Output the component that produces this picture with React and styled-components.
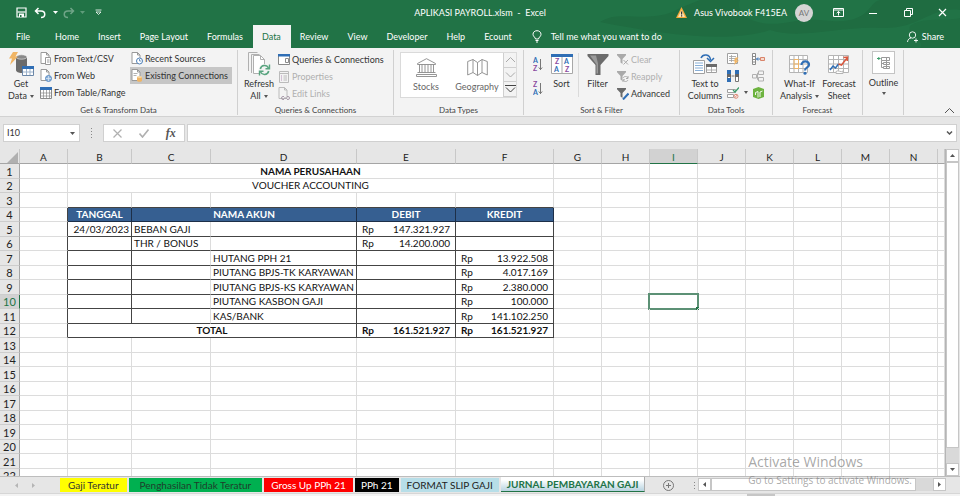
import React from "react";
import styled, { createGlobalStyle, css } from "styled-components";

const GlobalStyle = createGlobalStyle`
  * {
    box-sizing: border-box;
  }

  body {
    margin: 0;
    overflow: hidden;
    font-family: Lato, "Open Sans", sans-serif;
    font-size: 9px;
    line-height: 12px;
    color: #333;
  }

  button,
  input {
    font: inherit;
    color: inherit;
    margin: 0;
    padding: 0;
    border: none;
    border-radius: 0;
    background: none;
  }

  svg {
    display: block;
    flex: none;
  }
`;

const Window = styled.div`
  position: relative;
  display: flex;
  flex-direction: column;
  height: 100vh;
  background-color: #e6e6e6;
`;

/* ---------- header ---------- */

const Header = styled.header`
  position: relative;
  background-color: #217346;
  color: #fff;
`;

const HeaderArt = styled.svg`
  position: absolute;
  top: 0;
  right: 0;
`;

const TitleBar = styled.div`
  position: relative;
  display: grid;
  grid-template-columns: 1fr auto 1fr;
  align-items: center;
  height: 25px;
`;

const QuickAccess = styled.div`
  display: flex;
  align-items: center;
  padding-left: 14px;
`;

const PlainButton = styled.button`
  display: flex;
  align-items: center;
  justify-content: center;
  width: ${(props) => props.$width || 14}px;
  opacity: ${(props) => (props.$dim ? 0.35 : 1)};
`;

const Title = styled.div`
  white-space: pre;
`;

const Account = styled.div`
  display: flex;
  align-items: center;
  justify-content: flex-end;
  white-space: nowrap;
`;

const UserName = styled.span`
  margin: 0 8px 0 7px;
`;

const Avatar = styled.span`
  width: 18px;
  height: 18px;
  margin-right: 9px;
  border-radius: 50%;
  background-color: #d5d5d5;
  color: #777;
  font-size: 8px;
  line-height: 18px;
  text-align: center;
`;

const TabBar = styled.nav`
  position: relative;
  display: flex;
  height: 23px;
`;

const RibbonTab = styled.button`
  padding: 0 10px 0 9px;
  white-space: nowrap;

  &:first-child {
    padding: 0 16px;
  }

  ${(props) =>
    props.$active &&
    css`
      background-color: #f3f3f3;
      color: #217346;
    `}
`;

const TellMe = styled.button`
  display: flex;
  align-items: center;
  gap: 9px;
  margin-left: 10px;
  white-space: nowrap;
`;

const Share = styled.button`
  display: flex;
  align-items: center;
  gap: 4px;
  margin-left: auto;
  padding-right: 16px;
`;

/* ---------- ribbon ---------- */

const Ribbon = styled.div`
  display: flex;
  height: 69px;
  background-color: #f3f3f3;
  border-bottom: 1px solid #d2d2d2;
`;

const GroupBox = styled.section`
  display: flex;
  flex-direction: column;
  flex: none;
  width: ${(props) => props.$width}px;
  margin: 2px 0 1px;
  border-right: 1px solid #d0d0d0;
`;

const GroupBody = styled.div`
  display: flex;
  flex: 1;
  min-height: 0;
  padding-left: ${(props) => props.$indent || 0}px;
`;

const GroupName = styled.div`
  flex: none;
  font-size: 8px;
  line-height: 8px;
  height: 9px;
  text-align: center;
  color: #444;
`;

const BigButton = styled.button`
  display: flex;
  flex-direction: column;
  align-items: center;
  align-self: flex-start;
  width: ${(props) => props.$width}px;
  white-space: nowrap;
`;

const BigIcon = styled.span`
  display: flex;
  align-items: center;
  height: 28px;
`;

const WithArrow = styled.span`
  display: flex;
  align-items: center;
  gap: 3px;
`;

const Stack = styled.div`
  display: flex;
  flex-direction: column;
  align-items: flex-start;
  width: ${(props) => props.$width || 0}px;
  padding-top: ${(props) => (props.$low ? 1 : 0)}px;
`;

const SmallButton = styled.button`
  display: flex;
  align-items: center;
  gap: 2px;
  height: 17px;
  padding: 0 4px 0 1px;
  white-space: nowrap;
  color: ${(props) => (props.disabled ? "#b0b0b0" : "#333")};
  background-color: ${(props) => (props.$active ? "#c6c6c6" : "transparent")};
`;

const Gallery = styled.div`
  display: flex;
  flex: 1;
  height: 46px;
  margin: 2px 6px 0 0;
  border: 1px solid #dadada;
  background-color: #fff;
  color: #666;
`;

const GalleryItem = styled.button`
  display: flex;
  flex-direction: column;
  align-items: center;
  gap: 4px;
  padding-top: 5px;
  width: ${(props) => props.$width}px;
`;

const GalleryScroll = styled.div`
  display: flex;
  flex-direction: column;
  width: 13px;
  margin-left: auto;

  button {
    display: flex;
    flex: 1;
    align-items: center;
    justify-content: center;
    border-left: 1px solid #cfcfcf;
    border-bottom: 1px solid #cfcfcf;
    background-color: #f3f3f3;
  }
`;

const Divider = styled.div`
  width: 1px;
  height: 44px;
  margin-top: 3px;
  background-color: #dadada;
`;

const SortColumn = styled.div`
  display: flex;
  flex-direction: column;
  gap: 9px;
  width: 12px;
  padding-top: 7px;
`;

const ToolGrid = styled.div`
  display: grid;
  grid-template-columns: 25px 14px;
  grid-auto-rows: 17px;
  padding-left: 2px;

  button {
    display: flex;
    align-items: center;
    gap: 5px;
  }
`;

const OutlineButton = styled(BigButton)`
  gap: 3px;
`;

const OutlineFrame = styled.span`
  display: flex;
  align-items: center;
  justify-content: center;
  width: 23px;
  height: 23px;
  margin-top: 1px;
  border: 1px solid #c4c4c4;
  background-color: #fff;
`;

const Collapse = styled.button`
  display: flex;
  align-items: flex-end;
  margin-left: auto;
  padding: 0 5px 1px;
`;

/* ---------- formula bar ---------- */

const FormulaBar = styled.div`
  display: flex;
  align-items: center;
  height: 32px;
  padding: 0 3px;
`;

const Field = styled.div`
  display: flex;
  align-items: center;
  height: 18px;
  border: 1px solid #d0d0d0;
  background-color: #fff;
  width: ${(props) => (props.$width ? `${props.$width}px` : "auto")};
  flex: ${(props) => (props.$width ? "none" : 1)};
  justify-content: ${(props) => props.$justify || "flex-start"};

  input {
    flex: 1;
    min-width: 0;
    padding-left: 3px;
    outline: none;
  }
`;

const FormulaField = styled(Field)`
  margin-left: 2px;
`;

const Dots = styled.span`
  display: flex;
  flex-direction: column;
  align-items: center;
  justify-content: center;
  gap: 2px;
  width: ${(props) => props.$width}px;

  i {
    width: 1px;
    height: 1px;
    background-color: #888;
  }
`;

const FxButton = styled.button`
  width: 26px;
  font-family: "Liberation Serif", serif;
  font-size: 12px;
  font-style: italic;
  font-weight: bold;
  color: #555;
`;

/* ---------- worksheet ---------- */

const SheetArea = styled.main`
  display: flex;
  flex: 1;
  min-height: 0;
`;

const GridWrap = styled.div`
  flex: 1;
  min-width: 0;
  overflow: hidden;
  border-right: 1px solid #b5b5b5;
`;

const Grid = styled.table`
  width: 100%;
  table-layout: fixed;
  border-collapse: separate;
  border-spacing: 0;
  background-color: #fff;
  color: #111;
  font-size: 10px;
  line-height: 13px;
`;

const Col = styled.col`
  width: ${(props) => (props.$width ? `${props.$width}px` : "auto")};
`;

const ColHead = styled.th`
  height: 15px;
  padding: 2px 0 0;
  line-height: 12px;
  font-weight: 400;
  background-color: ${(props) => (props.$active ? "#d2d2d2" : "#e6e6e6")};
  color: ${(props) => (props.$active ? "#217346" : "#222")};
  border-right: 1px solid #c8c8c8;
  border-bottom: 1px solid ${(props) => (props.$active ? "#217346" : "#a5a5a5")};
`;

const Corner = styled(ColHead)`
  svg {
    margin: 0 1px 0 auto;
  }
`;

const RowHead = styled.th`
  padding: 0;
  font-size: 11px;
  font-weight: 400;
  background-color: ${(props) => (props.$active ? "#d2d2d2" : "#e6e6e6")};
  color: ${(props) => (props.$active ? "#217346" : "#222")};
  border-right: 1px solid ${(props) => (props.$active ? "#217346" : "#a5a5a5")};
  border-bottom: 1px solid #cdcdcd;
`;

const Row = styled.tr`
  height: ${(props) => (props.$number % 2 ? 15 : 14)}px;
`;

const Cell = styled.td`
  position: relative;
  padding: 0 2px;
  white-space: nowrap;
  text-align: ${(props) => props.$align || "left"};
  font-weight: ${(props) => (props.$bold ? 700 : 400)};
  border-right: 1px solid ${(props) => (props.$right ? "#444" : "#dcdcdc")};
  border-bottom: 1px solid ${(props) => (props.$bottom ? "#444" : "#dcdcdc")};

  ${(props) =>
    props.$head &&
    css`
      background-color: #365f91;
      color: #fff;
      border-color: #1d2f48;
    `}
`;

const Money = styled.div`
  display: flex;
  justify-content: space-between;
  padding: 0 3px;
`;

const Selection = styled.div`
  position: absolute;
  inset: -2px;
  border: 2px solid #5c9175;

  &::after {
    content: "";
    position: absolute;
    right: -2px;
    bottom: -2px;
    width: 3px;
    height: 3px;
    background-color: #217346;
  }
`;

const ScrollBar = styled.div`
  display: flex;
  flex-direction: ${(props) => (props.$vertical ? "column" : "row")};
  background-color: #d9d9d9;

  button {
    display: flex;
    align-items: center;
    justify-content: center;
    flex: none;
    width: 13px;
    height: 13px;
    background-color: #fff;
    border: 1px solid #c6c6c6;
  }
`;

const VerticalBar = styled(ScrollBar)`
  width: 13px;
  margin-right: 1px;
`;

const HorizontalBar = styled(ScrollBar)`
  flex: 1;
  margin: 1px 14px 0 0;
  height: 13px;
`;

const Thumb = styled.div`
  flex: ${(props) => props.$grow};
  background-color: #fff;
  border: 1px solid #c6c6c6;
`;

const Track = styled.div`
  flex: ${(props) => props.$grow};
`;

/* ---------- bottom ---------- */

const BottomBar = styled.footer`
  display: flex;
  height: 17px;
  border-top: 1px solid #bdbdbd;
`;

const SheetNav = styled.div`
  display: flex;
  align-items: center;
  justify-content: center;
  gap: 10px;
  width: 60px;
  padding-right: 10px;
`;

const SheetTab = styled.button`
  height: 14px;
  padding: 0 ${(props) => props.$pad}px;
  margin: 1px 2px 0 0;
  font-size: 10px;
  white-space: nowrap;
  background-color: ${(props) => props.$bg};
  color: ${(props) => props.$color};

  ${(props) =>
    props.$active &&
    css`
      height: 15px;
      margin: 0;
      font-weight: 700;
      background: linear-gradient(#fff 20%, #b7d3e0);
      border-bottom: 1px solid #217346;
      border-right: 1px solid #ababab;
    `}
`;

const AddSheet = styled.button`
  width: 46px;
  display: flex;
  align-items: center;
  justify-content: center;
`;

const StatusBar = styled.div`
  display: flex;
  align-items: flex-end;
  justify-content: flex-end;
  height: 3px;
  padding-right: 185px;
  background-color: #f3f3f3;
  border-top: 1px solid #d6d6d6;
`;

const ViewMode = styled.div`
  width: 28px;
  height: 2px;
  background-color: #c6c6c6;
`;

const Watermark = styled.div`
  position: absolute;
  right: 48px;
  bottom: 9px;
  color: rgba(130, 130, 130, 0.7);
  font-family: "Open Sans", sans-serif;
  font-size: 10px;
  line-height: 14px;
  white-space: nowrap;
  pointer-events: none;

  strong {
    display: block;
    font-size: 14px;
    line-height: 22px;
    font-weight: 400;
  }
`;

/* ---------- icons ---------- */

const Svg = ({ w, h, children, ...rest }) => (
  <svg
    width={w}
    height={h}
    viewBox={`0 0 ${w} ${h}`}
    fill="none"
    stroke="currentColor"
    aria-hidden="true"
    {...rest}
  >
    {children}
  </svg>
);

const Triangle = ({ dir = "down", color = "#555" }) => {
  const paths = {
    down: "M1 2h5L3.5 5z",
    up: "M1 5h5L3.5 2z",
    left: "M5 1v5L2 3.5z",
    right: "M2 1v5l3-2.5z",
  };
  return (
    <Svg w={7} h={7} stroke="none" fill={color}>
      <path d={paths[dir]} />
    </Svg>
  );
};

const MenuArrow = () => (
  <Svg w={4} h={3} stroke="none" fill="#555">
    <path d="M0 0h4L2 3z" />
  </Svg>
);

const Chevron = ({ up, color = "#777", bar }) => (
  <Svg w={11} h={9} stroke={color}>
    {bar && <path d="M0 .5h11" />}
    <path d={up ? "M1 7l4.5-4.5L10 7" : "M1 2.5L5.5 7 10 2.5"} />
  </Svg>
);

const SaveIcon = () => (
  <Svg w={11} h={11}>
    <path d="M1 1h9v9H1z" strokeWidth="1.2" />
    <path d="M1.5 5h8" strokeWidth="1.2" />
    <path d="M3 6.5h5V10H3z" fill="#fff" stroke="none" />
    <path d="M4 8h1.5v2H4z" fill="#217346" stroke="none" />
  </Svg>
);

const UndoIcon = ({ flip }) => (
  <Svg w={12} h={12} strokeWidth="1.5">
    <g transform={flip ? "translate(12 0) scale(-1 1)" : undefined}>
      <path d="M4.5 1L1.5 4l3 3M1.5 4H7c5 0 5 6.5 0 6.5" />
    </g>
  </Svg>
);

const WarningIcon = () => (
  <Svg w={11} h={11} stroke="none">
    <path d="M5.5 0L11 11H0z" fill="#f7a93b" />
    <path d="M5.5 3L9 10H2z" fill="#fce3b4" />
    <path d="M5 4.5h1.2v3H5zM5 8.2h1.2v1.2H5z" fill="#333" />
  </Svg>
);

const DisplayIcon = () => (
  <Svg w={11} h={9}>
    <path d="M.5.5h10v8H.5zM.5 2h10" />
    <path d="M5.5 7.5v-4M3.7 5.2l1.8-1.8 1.8 1.8" />
  </Svg>
);

const BulbIcon = () => (
  <Svg w={10} h={13}>
    <path d="M3.5 9C3.5 7.5 1 6.5 1 4.3 1 2.2 2.7.7 5 .7s4 1.5 4 3.6C9 6.5 6.5 7.5 6.5 9zM3.5 10.5h3M4 12h2" />
  </Svg>
);

const PersonIcon = () => (
  <Svg w={11} h={12} strokeWidth=".9">
    <circle cx="5.5" cy="4" r="3.2" />
    <path d="M.5 11c.3-2.5 1.7-3.8 3.5-4M7 9.5h4M9 7.5v4" />
  </Svg>
);

const GetDataIcon = () => (
  <Svg w={25} h={24} stroke="none">
    <path d="M7 5v13c0 4 11 4 11 0V5z" fill="#6b6b6b" />
    <ellipse cx="12.5" cy="5" rx="5.5" ry="2.2" fill="#8a8a8a" stroke="#f3f3f3" strokeWidth=".6" />
    <path d="M4 0h5L6.5 4.5H9L1 13l2-6.5H0z" fill="#f0b565" />
    <path d="M13.5 14.5h11v9h-11z" fill="#fff" stroke="#6b87a8" />
    <path d="M13 14h12v3H13z" fill="#2f6eb5" />
    <path d="M17.5 17v6M21 17v6M14 20h10" stroke="#9db3cc" />
  </Svg>
);

const FileIcon = ({ kind, muted }) => (
  <Svg w={12} h={13} stroke={muted ? "#bbb" : "#999"}>
    <path d="M1 .5h5.5L9 3v8.5H1z" fill={muted ? "#f3f3f3" : "#fff"} />
    <path d="M6.5.5V3H9" />
    {kind === "csv" && <path d="M5.5 5.5h5v7h-5zM7 8h2.5M7 10h2.5" fill="#fff" />}
    {kind === "web" && (
      <g>
        <circle cx="8.5" cy="9.5" r="3" fill="#8fb3da" stroke="#5f8fc4" />
        <path d="M6 9.5h5M8.5 7v5" stroke="#dbe8f5" strokeWidth=".7" />
      </g>
    )}
    {kind === "recent" && (
      <g>
        <circle cx="8.5" cy="9" r="3" fill="#fff" stroke="#4d7fb8" />
        <path d="M8.5 7v2h1.7" stroke="#4d7fb8" strokeWidth=".8" />
      </g>
    )}
    {kind === "conn" && (
      <g stroke="none">
        <path d="M2.5 4h4v.8h-4zM2.5 6h3v.8h-3z" fill="#999" />
        <path d="M6 8v3.5c0 1.8 5 1.8 5 0V8z" fill="#f0b565" />
        <ellipse cx="8.5" cy="8" rx="2.5" ry="1" fill="#f8d7a3" />
      </g>
    )}
    {kind === "links" && (
      <path d="M6 9.5H5a1.5 1.5 0 000 3h1M9 9.5h1a1.5 1.5 0 010 3H9M6 11h3" stroke="#a99bab" />
    )}
  </Svg>
);

const TableIcon = () => (
  <Svg w={12} h={12} stroke="#8a8a8a">
    <path d="M.5.5h11v11H.5z" fill="#fff" />
    <path d="M0 0h12v3H0z" fill="#2f6eb5" stroke="none" />
    <path d="M3.5 3v9M6.5 3v9M9.5 3v9M0 6h12M0 9h12" strokeWidth=".7" />
  </Svg>
);

const RefreshIcon = () => (
  <Svg w={23} h={24} stroke="#b0b0b0">
    <path d="M.5 19V.5h9M3.5 21V2.5h8" />
    <path d="M5.5 3.5h7l4 4v14h-11z" fill="#fff" />
    <path d="M12.5 3.5v4h4" />
    <circle cx="16.5" cy="18" r="6" fill="#f3f3f3" stroke="none" />
    <path d="M12.3 17c1-4.3 6.5-4.5 8.2-1M20.7 19c-1 4.3-6.5 4.5-8.2 1" stroke="#5aa580" strokeWidth="1.6" />
    <path d="M21.5 12.5v4.3h-4M11.5 23.5v-4.3h4" stroke="#5aa580" strokeWidth="1.4" />
  </Svg>
);

const QueriesIcon = () => (
  <Svg w={12} h={11} stroke="#8a8a8a">
    <path d="M.5.5h11v10H.5z" fill="#fff" />
    <path d="M0 0h12v2.5H0z" fill="#2f6eb5" stroke="none" />
    <path d="M7.5 4.5h3v4h-3z" />
  </Svg>
);

const PropertiesIcon = () => (
  <Svg w={12} h={12} stroke="#bbb">
    <path d="M1.5.5h9v11h-9zM1.5 2.5h9" />
    <path d="M3 5h1M3 7h1M3 9h1" stroke="#b58fb9" />
    <path d="M5.5 5H9M5.5 7H9M5.5 9H9" />
  </Svg>
);

const StocksIcon = () => (
  <Svg w={21} h={19} stroke="#8a8a8a">
    <path d="M1.5 6.5v-1L10.5.7l9 4.8v1zM3.5 6.5v8M6 6.5v8M9 6.5v8M12 6.5v8M15 6.5v8M17.5 6.5v8M1.5 14.5h18M.5 18.5v-2h20v2z" strokeWidth=".9" />
  </Svg>
);

const MapIcon = () => (
  <Svg w={21} h={19} stroke="#8a8a8a">
    <path d="M.7 3.5L6 1.5l4.5 3 4.5-3 5.3 2v13.5L15 14.5l-4.5 3-4.5-3-5.3 2.5zM6 1.5v13M10.5 4.5v13M15 1.5v13" strokeWidth=".9" />
  </Svg>
);

const Letter = ({ x, y, fill, children }) => (
  <text
    x={x}
    y={y}
    fontSize="7"
    fontWeight="700"
    fontFamily="Lato, sans-serif"
    fill={fill}
    stroke="none"
  >
    {children}
  </text>
);

const blue = "#2f6eb5";
const purple = "#8a4a9e";

const SortDirIcon = ({ desc }) => (
  <Svg w={10} h={15} stroke="#777">
    <Letter x={0} y={6} fill={desc ? purple : blue}>{desc ? "Z" : "A"}</Letter>
    <Letter x={0} y={14} fill={desc ? blue : purple}>{desc ? "A" : "Z"}</Letter>
    <path d="M7.5 2v11M5.8 10.5l1.7 2 1.7-2" />
  </Svg>
);

const SortIcon = () => (
  <Svg w={22} h={20} stroke="#a8a8a8">
    <path d="M.5.5h21v19H.5zM11 3v16" fill="#fff" />
    <path d="M0 0h22v3H0z" fill={blue} stroke="none" />
    <Letter x={4} y={10} fill={purple}>Z</Letter>
    <Letter x={3} y={18} fill={blue}>A</Letter>
    <Letter x={13} y={10} fill={blue}>A</Letter>
    <Letter x={14} y={18} fill={purple}>Z</Letter>
  </Svg>
);

const FilterIcon = () => (
  <Svg w={22} h={21} stroke="none">
    <path d="M.5 0h21v2L13.5 11v10h-5V11L.5 2z" fill="#6b6b6b" />
    <path d="M3 1.5h6l2 8v10h-1.5V10.5z" fill="#9a9a9a" />
  </Svg>
);

const SmallFilter = ({ kind }) => (
  <Svg w={12} h={12} stroke="none">
    <path d="M0 0h9v1.2L5.5 5v5l-2-1.5V5L0 1.2z" fill={kind === "advanced" ? "#6b6b6b" : "#aaa"} />
    {kind === "clear" && <path d="M6.5 6l4.5 4.5M11 6l-4.5 4.5" stroke="#aaa" />}
    {kind === "reapply" && (
      <path d="M6 7c1-2 4-2 5 0M11 5v2.5H9M11 9c-1 2-4 2-5 0M6 11V8.8h2" stroke="#aaa" />
    )}
    {kind === "advanced" && <path d="M6 11.5l5.5-6" stroke={blue} strokeWidth="2" />}
  </Svg>
);

const TextColumnsIcon = () => (
  <Svg w={24} h={20} stroke="#a0a0a0">
    <path d="M.5 6.5h11v13H.5z" fill="#fff" />
    <path d="M2 9h8M2 11.5h8M2 14h8M2 16.5h8" stroke="#7ba6d3" strokeWidth=".9" />
    <path d="M8 4c2-4.5 9-4 9.5 2" stroke={blue} strokeWidth="1.5" />
    <path d="M14 4l3.5 3.5L21 4" stroke={blue} strokeWidth="1.5" />
    <path d="M13.5 10.5h10v8h-10z" fill="#fff" />
    <path d="M13 10h11v3H13z" fill="#6b6b6b" stroke="none" />
    <path d="M18.5 13v6M13 16h11" strokeWidth=".8" />
  </Svg>
);

const FlashFillIcon = () => (
  <Svg w={12} h={12} stroke="#a0a0a0">
    <path d="M.5.5h10v10H.5z" fill="#fff" />
    <path d="M2 3.5h7M2 5.5h7M2 7.5h5M4.5 2v7" strokeWidth=".8" />
    <path d="M8.5 4.5h3L9.5 7.5H12L7 12l1-3.5H6.5z" fill="#f0b565" stroke="none" />
  </Svg>
);

const DuplicatesIcon = () => (
  <Svg w={12} h={12} stroke="#777">
    <path d="M.5.5h3v11h-3zM8.5.5h3v11h-3z" fill="#fff" />
    <path d="M0 0h4v4H0zM8 0h4v4H8zM0 8h4v4H0z" fill={blue} stroke="none" />
    <path d="M0 4h4v3H0zM8 4h4v3H8z" fill="#666" stroke="none" />
    <path d="M4.5 6h3" stroke="#777" />
  </Svg>
);

const ValidationIcon = () => (
  <Svg w={12} h={12} stroke="#a0a0a0">
    <path d="M.5 2.5h8v3h-8zM.5 7.5h6v3h-6z" fill="#fff" />
    <path d="M6 3l2 2 4-4.5" stroke="#3c9d6b" strokeWidth="1.3" />
    <circle cx="9" cy="9.3" r="2" stroke="#e08a78" />
    <path d="M7.7 10.6l2.6-2.6" stroke="#e08a78" />
  </Svg>
);

const ConsolidateIcon = () => (
  <Svg w={13} h={12} stroke="#8a8a8a">
    <path d="M.5.5h3v11h-3zM.5 3.5h3M.5 6.5h3M.5 9h3" fill="#fff" />
    <path d="M4.5 6H8M6 4.5L4.5 6 6 7.5" stroke={blue} />
    <path d="M8.5 4.5h4v3h-4z" fill="#f7d9cb" stroke="#d9846b" />
  </Svg>
);

const RelationsIcon = () => (
  <Svg w={13} h={12} stroke="#b0b0b0">
    <path d="M6.5 1h5v3.5h-5zM.5 4.5h4V8h-4zM6.5 7.5h5V11h-5zM4.5 6h1V3h1M5.5 6v3.5h1" />
  </Svg>
);

const ModelIcon = () => (
  <Svg w={12} h={12} stroke="none">
    <path d="M6.5 0L12 2v8l-5.5 2L1 10V2z" fill="#6db33f" />
    <path d="M3.5 8V5.5L6 4.5v6M8 10V5l2.5-1" stroke="#fff" fill="none" strokeWidth=".9" />
  </Svg>
);

const WhatIfIcon = () => (
  <Svg w={22} h={21} stroke="#b5b5b5">
    <path d="M.5 1.5h18v17H.5zM.5 5.5h18M.5 10h18M.5 14.5h18M5 1.5v17M9.5 1.5v17M14 1.5v17" fill="#fff" />
    <path d="M5 5.5h4.5v9H5zM5 10h4.5" stroke="#f0b565" />
    <path d="M12.5 11c0-5 8-4.5 7.5 0-.2 2.5-4 2.5-4 5.5" stroke={blue} strokeWidth="2.2" />
    <circle cx="16" cy="19.3" r="1.5" fill={blue} stroke="none" />
  </Svg>
);

const ForecastIcon = () => (
  <Svg w={22} h={21} stroke="#b5b5b5">
    <path d="M.5 1.5h20v17H.5zM.5 5.5h20M.5 10h20M.5 14.5h20M5.5 1.5v17M10.5 1.5v17M15.5 1.5v17" fill="#fff" />
    <path d="M2 16l3-4 2.5 2 3-4" stroke={blue} strokeWidth="1.5" />
    <path d="M10.5 10l3 1 5.5-7M15.5 3.5l4-.5-.3 4" stroke="#d9583f" strokeWidth="1.5" />
    <path d="M8 17.5c2-2 5 1.5 7-.5v2.5H8z" fill="#fff" />
  </Svg>
);

const OutlineIcon = () => (
  <Svg w={13} h={13} stroke="#999">
    <path d="M4.5 1.5h8v3h-8zM6.5 6.5h6v2h-6zM6.5 10.5h6v2h-6zM4.5 4.5v7h2M4.5 7.5h2M9.5 1.5v11" />
    <path d="M0 2.5h3.5M1.8 1v3" stroke="#3c9d6b" />
  </Svg>
);

/* ---------- data ---------- */

const menuTabs = [
  "File",
  "Home",
  "Insert",
  "Page Layout",
  "Formulas",
  "Data",
  "Review",
  "View",
  "Developer",
  "Help",
  "Ecount",
];

const columns = [
  ["A", 48],
  ["B", 64],
  ["C", 79],
  ["D", 146],
  ["E", 99],
  ["F", 98],
  ["G", 48],
  ["H", 48],
  ["I", 48],
  ["J", 48],
  ["K", 48],
  ["L", 48],
  ["M", 48],
  ["N", 48],
  ["", 0],
];

const journal = {
  5: { date: "24/03/2023", account: "BEBAN GAJI", debit: "147.321.927" },
  6: { account: "THR / BONUS", debit: "14.200.000" },
  7: { contra: "HUTANG PPH 21", credit: "13.922.508" },
  8: { contra: "PIUTANG BPJS-TK KARYAWAN", credit: "4.017.169" },
  9: { contra: "PIUTANG BPJS-KS KARYAWAN", credit: "2.380.000" },
  10: { contra: "PIUTANG KASBON GAJI", credit: "100.000" },
  11: { contra: "KAS/BANK", credit: "141.102.250" },
};

const sheetTabs = [
  { name: "Gaji Teratur", bg: "#ffff00", color: "#333", pad: 8 },
  { name: "Penghasilan Tidak Teratur", bg: "#00b050", color: "#1f3d2b", pad: 11 },
  { name: "Gross Up PPh 21", bg: "#ff0000", color: "#fff", pad: 7 },
  { name: "PPh 21", bg: "#000", color: "#fff", pad: 6 },
  { name: "FORMAT SLIP GAJI", bg: "#b7dee8", color: "#222", pad: 6 },
  { name: "JURNAL PEMBAYARAN GAJI", color: "#217346", pad: 6, active: true },
];

/* ---------- parts ---------- */

const Group = ({ name, width, indent, children }) => (
  <GroupBox $width={width} aria-label={name}>
    <GroupBody $indent={indent}>{children}</GroupBody>
    <GroupName>{name}</GroupName>
  </GroupBox>
);

const Amount = ({ value }) =>
  value ? (
    <Money>
      <span>Rp</span>
      <span>{value}</span>
    </Money>
  ) : null;

function RowCells({ row }) {
  if (row === 1 || row === 2) {
    return (
      <Cell colSpan={5} $align="center" $bold={row === 1}>
        {row === 1 ? "NAMA PERUSAHAAN" : "VOUCHER ACCOUNTING"}
      </Cell>
    );
  }
  if (row === 4) {
    return (
      <>
        <Cell $head $bold $align="center">TANGGAL</Cell>
        <Cell $head $bold $align="center" colSpan={2}>NAMA AKUN</Cell>
        <Cell $head $bold $align="center">DEBIT</Cell>
        <Cell $head $bold $align="center">KREDIT</Cell>
      </>
    );
  }
  if (row === 12) {
    return (
      <>
        <Cell $bold $right $bottom $align="center" colSpan={3}>TOTAL</Cell>
        <Cell $bold $right $bottom><Amount value="161.521.927" /></Cell>
        <Cell $bold $right $bottom><Amount value="161.521.927" /></Cell>
      </>
    );
  }
  const entry = journal[row];
  if (entry) {
    return (
      <>
        <Cell $right $bottom $align="right">{entry.date}</Cell>
        <Cell $bottom>{entry.account}</Cell>
        <Cell $right $bottom>{entry.contra}</Cell>
        <Cell $right $bottom><Amount value={entry.debit} /></Cell>
        <Cell $right $bottom><Amount value={entry.credit} /></Cell>
      </>
    );
  }
  return ["B", "C", "D", "E", "F"].map((name) => (
    <Cell key={name} $bottom={row === 3} />
  ));
}

function Worksheet() {
  const rows = Array.from({ length: 22 }, (_, i) => i + 1);
  return (
    <Grid>
      <colgroup>
        <Col $width={20} />
        {columns.map(([name, width]) => (
          <Col key={name} $width={width} />
        ))}
      </colgroup>
      <thead>
        <tr>
          <Corner>
            <Svg w={11} h={11} stroke="none" fill="#b0b0b0">
              <path d="M11 0v11H0z" />
            </Svg>
          </Corner>
          {columns.map(([name]) => (
            <ColHead key={name} $active={name === "I"}>{name}</ColHead>
          ))}
        </tr>
      </thead>
      <tbody>
        {rows.map((row) => (
          <Row key={row} $number={row}>
            <RowHead $active={row === 10}>{row}</RowHead>
            <Cell $right={row > 3 && row < 13} />
            <RowCells row={row} />
            {columns.slice(6).map(([name]) => (
              <Cell key={name}>{name === "I" && row === 10 && <Selection />}</Cell>
            ))}
          </Row>
        ))}
      </tbody>
    </Grid>
  );
}

function RibbonPanel() {
  return (
    <Ribbon>
      <Group name="Get & Transform Data" width={238} indent={3}>
        <BigButton $width={36}>
          <BigIcon><GetDataIcon /></BigIcon>
          <span>Get</span>
          <WithArrow>Data <MenuArrow /></WithArrow>
        </BigButton>
        <Stack $width={91}>
          <SmallButton><FileIcon kind="csv" />From Text/CSV</SmallButton>
          <SmallButton><FileIcon kind="web" />From Web</SmallButton>
          <SmallButton><TableIcon />From Table/Range</SmallButton>
        </Stack>
        <Stack $width={102}>
          <SmallButton><FileIcon kind="recent" />Recent Sources</SmallButton>
          <SmallButton $active><FileIcon kind="conn" />Existing Connections</SmallButton>
        </Stack>
      </Group>
      <Group name="Queries & Connections" width={156} indent={3}>
        <BigButton $width={36}>
          <BigIcon><RefreshIcon /></BigIcon>
          <span>Refresh</span>
          <WithArrow>All <MenuArrow /></WithArrow>
        </BigButton>
        <Stack $width={112} $low>
          <SmallButton><QueriesIcon />Queries & Connections</SmallButton>
          <SmallButton disabled><PropertiesIcon />Properties</SmallButton>
          <SmallButton disabled><FileIcon kind="links" muted />Edit Links</SmallButton>
        </Stack>
      </Group>
      <Group name="Data Types" width={130} indent={6}>
        <Gallery>
          <GalleryItem $width={50}><StocksIcon />Stocks</GalleryItem>
          <GalleryItem $width={52}><MapIcon />Geography</GalleryItem>
          <GalleryScroll>
            <button aria-label="Previous"><Chevron up color="#aaa" /></button>
            <button aria-label="Next"><Chevron color="#aaa" /></button>
            <button aria-label="More"><Chevron color="#444" bar /></button>
          </GalleryScroll>
        </Gallery>
      </Group>
      <Group name="Sort & Filter" width={156} indent={9}>
        <SortColumn>
          <button aria-label="Sort A to Z"><SortDirIcon /></button>
          <button aria-label="Sort Z to A"><SortDirIcon desc /></button>
        </SortColumn>
        <BigButton $width={33}>
          <BigIcon><SortIcon /></BigIcon>
          <span>Sort</span>
        </BigButton>
        <Divider />
        <BigButton $width={37}>
          <BigIcon><FilterIcon /></BigIcon>
          <span>Filter</span>
        </BigButton>
        <Stack $width={60} $low>
          <SmallButton disabled><SmallFilter kind="clear" />Clear</SmallButton>
          <SmallButton disabled><SmallFilter kind="reapply" />Reapply</SmallButton>
          <SmallButton><SmallFilter kind="advanced" />Advanced</SmallButton>
        </Stack>
      </Group>
      <Group name="Data Tools" width={93} indent={5}>
        <BigButton $width={40}>
          <BigIcon><TextColumnsIcon /></BigIcon>
          <span>Text to</span>
          <span>Columns</span>
        </BigButton>
        <ToolGrid>
          <button aria-label="Flash Fill"><FlashFillIcon /></button>
          <button aria-label="Consolidate"><ConsolidateIcon /></button>
          <button aria-label="Remove Duplicates"><DuplicatesIcon /></button>
          <button aria-label="Relationships"><RelationsIcon /></button>
          <button aria-label="Data Validation"><ValidationIcon /><MenuArrow /></button>
          <button aria-label="Manage Data Model"><ModelIcon /></button>
        </ToolGrid>
      </Group>
      <Group name="Forecast" width={90} indent={6}>
        <BigButton $width={41}>
          <BigIcon><WhatIfIcon /></BigIcon>
          <span>What-If</span>
          <WithArrow>Analysis <MenuArrow /></WithArrow>
        </BigButton>
        <BigButton $width={38}>
          <BigIcon><ForecastIcon /></BigIcon>
          <span>Forecast</span>
          <span>Sheet</span>
        </BigButton>
      </Group>
      <Group name="" width={41} indent={1}>
        <OutlineButton $width={39}>
          <OutlineFrame><OutlineIcon /></OutlineFrame>
          <span>Outline</span>
          <MenuArrow />
        </OutlineButton>
      </Group>
      <Collapse aria-label="Collapse the ribbon"><Chevron up color="#555" /></Collapse>
    </Ribbon>
  );
}

export default function App() {
  return (
    <Window>
      <GlobalStyle />
      <Header>
        <HeaderArt width="360" height="48" viewBox="0 0 360 48" aria-hidden="true">
          <path
            d="M0 22c20-14 50 4 80-14l20-8h40c-6 18 20 28 50 22s40 2 60-2 20-18 30-20h80v10c-30-4-40 20-80 18s-80 12-110 2c-40 14-110 4-170-8z"
            fill="#1f6c41"
          />
          <path d="M310 26c14-10 34-4 50-8v30h-40c6-8-14-12-10-22z" fill="#1f6e42" />
        </HeaderArt>
        <TitleBar>
          <QuickAccess>
            <PlainButton aria-label="Save"><SaveIcon /></PlainButton>
            <PlainButton $width={24} aria-label="Undo"><UndoIcon /></PlainButton>
            <Triangle color="#fff" />
            <PlainButton $width={20} $dim aria-label="Redo"><UndoIcon flip /></PlainButton>
            <Triangle color="#5f9c7a" />
            <PlainButton $width={24} aria-label="Customize toolbar">
              <Svg w={7} h={7}><path d="M.5 1h6M1 3h5L3.5 5.5z" strokeWidth=".8" /></Svg>
            </PlainButton>
          </QuickAccess>
          <Title>APLIKASI PAYROLL.xlsm  -  Excel</Title>
          <Account>
            <WarningIcon />
            <UserName>Asus Vivobook F415EA</UserName>
            <Avatar>AV</Avatar>
            <PlainButton $width={32} aria-label="Ribbon display options"><DisplayIcon /></PlainButton>
            <PlainButton $width={38} aria-label="Minimize">
              <Svg w={8} h={8}><path d="M0 4.5h8" /></Svg>
            </PlainButton>
            <PlainButton $width={32} aria-label="Restore">
              <Svg w={9} h={9}><path d="M.5 2.5h6v6h-6zM2.5 2.5v-2h6v6h-2" /></Svg>
            </PlainButton>
            <PlainButton $width={36} aria-label="Close">
              <Svg w={9} h={9}><path d="M1 1l7 7M8 1L1 8" strokeWidth="1.2" /></Svg>
            </PlainButton>
          </Account>
        </TitleBar>
        <TabBar>
          {menuTabs.map((name) => (
            <RibbonTab key={name} $active={name === "Data"}>{name}</RibbonTab>
          ))}
          <TellMe><BulbIcon />Tell me what you want to do</TellMe>
          <Share><PersonIcon />Share</Share>
        </TabBar>
      </Header>

      <RibbonPanel />

      <FormulaBar>
        <Field $width={77}>
          <input aria-label="Name box" defaultValue="I10" />
          <PlainButton aria-label="Name list"><Triangle /></PlainButton>
        </Field>
        <Dots $width={23}><i /><i /><i /><i /></Dots>
        <Field $width={82} $justify="space-around">
          <PlainButton $width={26} aria-label="Cancel">
            <Svg w={9} h={9} stroke="#b0b0b0"><path d="M.5.5l8 8M8.5.5l-8 8" strokeWidth="1.2" /></Svg>
          </PlainButton>
          <PlainButton $width={26} aria-label="Enter">
            <Svg w={10} h={9} stroke="#b0b0b0"><path d="M.5 4.5l3 3.5 6-7.5" strokeWidth="1.6" /></Svg>
          </PlainButton>
          <FxButton aria-label="Insert function">fx</FxButton>
        </Field>
        <FormulaField>
          <input aria-label="Formula" />
          <PlainButton aria-label="Expand formula bar">
            <Svg w={7} h={6} stroke="#555"><path d="M1 1.5L3.5 4 6 1.5" strokeWidth="1.5" /></Svg>
          </PlainButton>
        </FormulaField>
      </FormulaBar>

      <SheetArea>
        <GridWrap>
          <Worksheet />
        </GridWrap>
        <VerticalBar $vertical>
          <button aria-label="Scroll up"><Triangle dir="up" /></button>
          <Thumb $grow={19} />
          <Track $grow={1} />
          <button aria-label="Scroll down"><Triangle /></button>
        </VerticalBar>
      </SheetArea>

      <BottomBar>
        <SheetNav>
          <Triangle dir="left" color="#b5b5b5" />
          <Triangle dir="right" color="#b5b5b5" />
        </SheetNav>
        {sheetTabs.map((tab) => (
          <SheetTab
            key={tab.name}
            $bg={tab.bg}
            $color={tab.color}
            $pad={tab.pad}
            $active={tab.active}
          >
            {tab.name}
          </SheetTab>
        ))}
        <AddSheet aria-label="New sheet">
          <Svg w={11} h={11} stroke="#777">
            <circle cx="5.5" cy="5.5" r="5" />
            <path d="M5.5 3v5M3 5.5h5" />
          </Svg>
        </AddSheet>
        <Dots $width={7}><i /><i /><i /></Dots>
        <HorizontalBar>
          <button aria-label="Scroll left"><Triangle dir="left" /></button>
          <Thumb $grow={12} />
          <Track $grow={1} />
          <button aria-label="Scroll right"><Triangle dir="right" /></button>
        </HorizontalBar>
      </BottomBar>
      <StatusBar>
        <ViewMode />
      </StatusBar>

      <Watermark>
        <strong>Activate Windows</strong>
        Go to Settings to activate Windows.
      </Watermark>
    </Window>
  );
}
